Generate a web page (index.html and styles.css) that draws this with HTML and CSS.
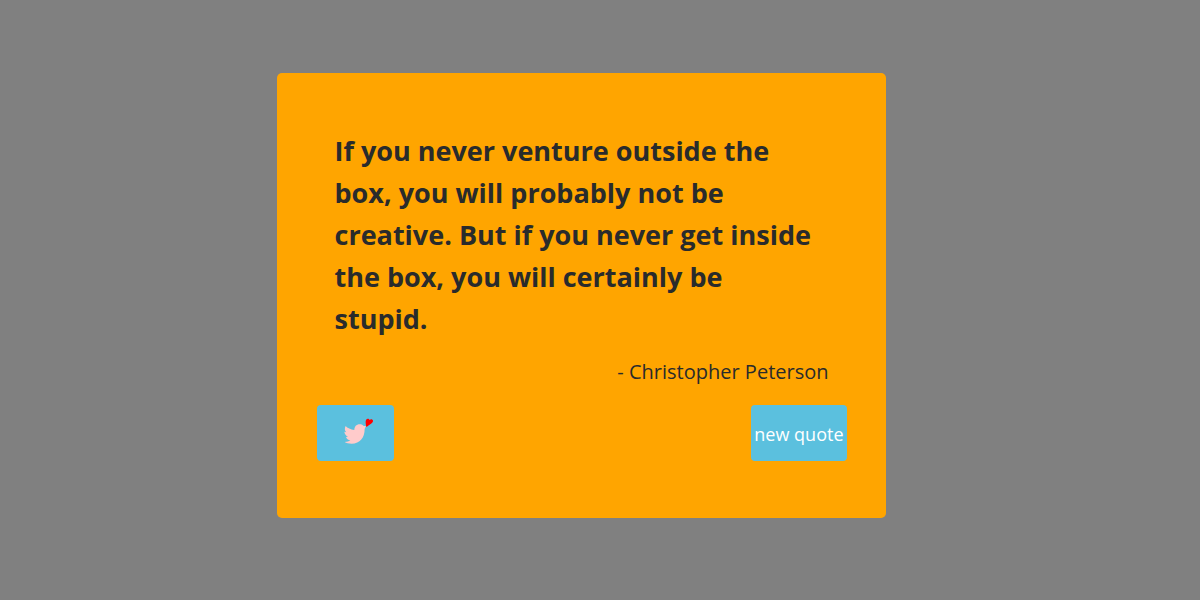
FILE: index.html
```html
<!DOCTYPE html>
<html lang="en">
<head>
<meta charset="utf-8">
<meta name="viewport" content="width=device-width, initial-scale=1">
<title>Random Quote</title>
<link rel="stylesheet" href="styles.css">
</head>
<body>
<main class="quote-box">
  <figure class="quote">
    <blockquote class="quote-text">If you never venture outside the box, you will probably not be creative. But if you never get inside the box, you will certainly be stupid.</blockquote>
    <figcaption class="quote-author">- Christopher Peterson</figcaption>
  </figure>
  <div class="actions">
    <a class="button tweet" href="#" aria-label="Tweet this quote">
      <svg class="bird" viewBox="26 18 90 81" aria-hidden="true">
        <path fill="#ffcbcb" d="M31 42C36 48 46 53 57 54C57 44 63 37 73 37C79 37 82 39 85 42L92 42L88 51C88 77 74 95 49 95C40 95 33 94 28 90C35 90 40 89 45 85C38 84 34 81 32 75L38 74C32 71 28 66 27 59L33 61C28 56 27 49 31 42Z"/>
        <path fill="#f00" d="M93 45C91 36 90 29 92 24C95 19 101 20 103 24C106 20 112 21 113 26C114 33 103 37 93 45Z"/>
      </svg>
    </a>
    <button class="button" type="button">new quote</button>
  </div>
</main>
</body>
</html>
```
FILE: styles.css
```css
* {
  box-sizing: border-box;
}

body {
  margin: 0;
  min-height: 100vh;
  padding: 73px 38px 0 0;
  background: #808080;
  color: #292b2c;
  font-family: "Segoe UI", "Open Sans", "Noto Sans", sans-serif;
}

.quote-box {
  width: 100%;
  max-width: 609px;
  margin: 0 auto;
  padding: 57px 39px 57px 40px;
  border-radius: 5px;
  background: #ffa500;
}

.quote {
  margin: 0;
  padding: 0 18px;
}

.quote-text {
  margin: 0;
  padding-right: 12px;
  font-size: 27px;
  font-weight: 700;
  line-height: 42px;
}

.quote-author {
  margin-top: 17px;
  font-size: 20px;
  line-height: 30px;
  text-align: right;
}

.actions {
  display: flex;
  justify-content: space-between;
  margin-top: 18px;
}

.button {
  display: flex;
  align-items: center;
  justify-content: center;
  height: 56px;
  min-width: 77px;
  padding: 2px 3px 0;
  border: 0;
  border-radius: 4px;
  background: #5bc0de;
  color: #fff;
  font: 18px/28px "Segoe UI", "Open Sans", "Noto Sans", sans-serif;
}

.tweet {
  padding: 0 0 3px 7px;
}

.bird {
  width: 30px;
  height: 27px;
}
```
